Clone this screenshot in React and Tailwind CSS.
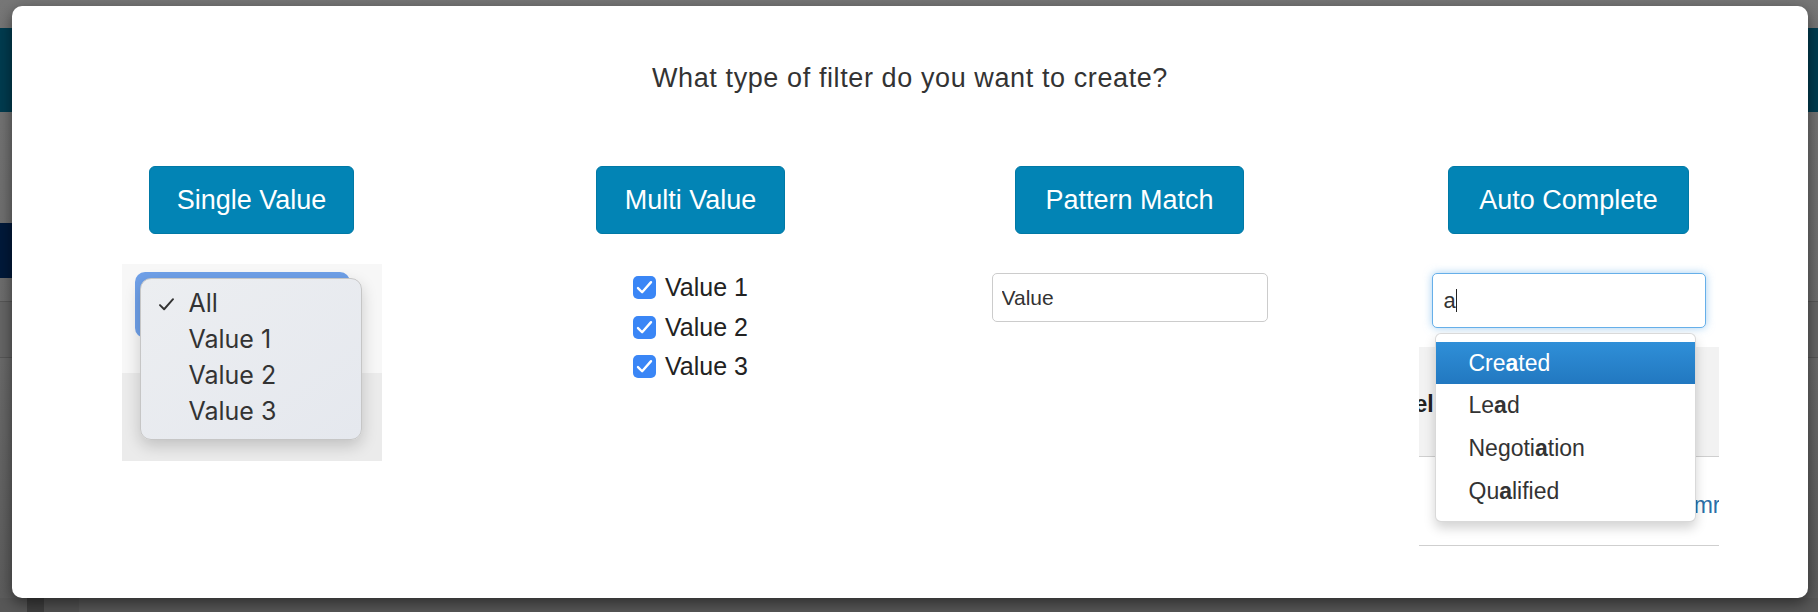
import { Fragment } from "react";

const CheckIcon = ({ className, width = "2.2" }) => (
  <svg viewBox="0 0 16 16" className={className} fill="none" stroke="currentColor" strokeWidth={width} strokeLinecap="round" strokeLinejoin="round">
    <path d="M2.5 8.5l3.5 3.5 7.5-8.5" />
  </svg>
);

// highlight the matched letter in bold
function Match({ text, at }) {
  return (
    <Fragment>
      {text.slice(0, at)}
      <span className="font-bold">{text[at]}</span>
      {text.slice(at + 1)}
    </Fragment>
  );
}

function FilterButton({ label, width }) {
  return (
    <button className={`flex h-[68px] ${width} items-center justify-center rounded-[6px] border border-[#0079a6] bg-[#0284b5] text-[27px] text-white`}>
      {label}
    </button>
  );
}

function SingleValuePreview() {
  const items = ["All", "Value 1", "Value 2", "Value 3"];
  return (
    <div className="relative mt-[30px] flex h-[197px] w-[260px] flex-col">
      <div className="h-[109px] bg-[#f7f7f7] pl-[13px] pt-[8px]">
        <div className="h-[66px] w-[215px] rounded-[10px] bg-[#6fa0e8]" />
      </div>
      <div className="flex-1 bg-[#ebebeb]" />

      {/* native select menu */}
      <div className="absolute left-[18px] top-[14px] h-[162px] w-[222px] rounded-[11px] border border-[#c6c6c6] bg-linear-to-br from-[#eceef1] to-[#e5e8ee] pt-[7px] font-['Inter','Liberation_Sans',sans-serif] text-[25px] text-[#333] shadow-[0_6px_16px_rgba(0,0,0,0.18)]">
        {items.map((item, i) => (
          <div key={item} className="flex h-[36px] items-center">
            <span className="flex w-[48px] pl-[16px]">
              {i === 0 && <CheckIcon className="h-[19px] w-[19px] text-[#333]" width="1.6" />}
            </span>
            <span>{item}</span>
          </div>
        ))}
      </div>
    </div>
  );
}

function MultiValuePreview() {
  return (
    <div className="mt-[34px] flex flex-col">
      {["Value 1", "Value 2", "Value 3"].map((v) => (
        <label key={v} className="flex h-[39.5px] items-center gap-[9px]">
          <span className="flex h-[23px] w-[23px] items-center justify-center rounded-[5px] bg-[#3a86f6]">
            <CheckIcon className="h-[19px] w-[19px] text-white" width="2" />
          </span>
          <span className="text-[25px] text-[#222]">{v}</span>
        </label>
      ))}
    </div>
  );
}

function PatternPreview() {
  return (
    <input
      readOnly
      value="Value"
      className="mt-[39px] h-[49px] w-[276px] rounded-[5px] border border-[#cccccc] bg-white px-[9px] text-[21px] text-[#333] outline-none"
    />
  );
}

function AutoCompletePreview() {
  const options = [
    ["Created", 3],
    ["Lead", 2],
    ["Negotiation", 6],
    ["Qualified", 2],
  ];
  return (
    <div className="relative mt-[39px] flex w-[300px] flex-col items-center">
      <div className="flex h-[55px] w-[274px] items-center rounded-[5px] border border-[#66afe9] bg-white pl-[11px] text-[22px] text-[#333] shadow-[0_0_8px_rgba(102,175,233,0.6)]">
        a<span className="h-[23px] w-[1.5px] bg-[#222]" />
      </div>

      {/* table behind the menu */}
      <div className="mt-[19px] w-full">
        <div className="flex h-[110px] items-center overflow-hidden border-b border-[#cfcfcf] bg-[#f2f2f2] pt-[6px]">
          <span className="-ml-[4px] text-[23px] font-bold text-[#222]">el</span>
        </div>
        <div className="flex h-[89px] items-center justify-end overflow-hidden border-b border-[#cfcfcf] pt-[8px]">
          <span className="-mr-[2px] text-[23px] text-[#2a6fa8]">mr</span>
        </div>
      </div>

      {/* suggestions */}
      <div className="absolute left-[16px] top-[60px] w-[261px] rounded-[6px] border border-black/15 bg-white py-[8px] text-[23px] text-[#333] shadow-[0_6px_12px_rgba(0,0,0,0.175)]">
        {options.map(([label, at], i) => (
          <div
            key={label}
            className={
              i === 0
                ? "flex h-[42px] items-center bg-linear-to-b from-[#2f8fd8] to-[#2278c0] pl-[33px] text-white"
                : "flex h-[43px] items-center pl-[33px]"
            }
          >
            <Match text={label} at={at} />
          </div>
        ))}
      </div>
    </div>
  );
}

export default function App() {
  return (
    <div className="relative h-[612px] w-[1818px] overflow-hidden bg-linear-to-b from-[#777777] via-[#6d6d6d] to-[#5c5c5c] font-['Liberation_Sans',Arial,sans-serif]">
      {/* page under the overlay */}
      <div className="flex h-full flex-col">
        <div className="h-[28px]" />
        <div className="h-[84px] bg-[#003c50]" />
        <div className="h-[111px]" />
        <div className="h-[55px] w-[600px] bg-[#00193a]" />
        <div className="h-[23px]" />
        <div className="h-[57px] border-y border-[#575757] bg-[#666666]" />
        <div className="flex-1" />
        <div className="flex h-[14px] bg-[#585858] pl-[27px]">
          <div className="w-[17px] bg-[#3f3f3f]" />
          <div className="w-[35px] bg-[#525252]" />
        </div>
      </div>

      {/* modal */}
      <div className="absolute left-[12px] top-[6px] h-[592px] w-[1796px] rounded-[10px] bg-white px-[20px] pt-[53px] shadow-[0_5px_15px_rgba(0,0,0,0.5)]">
        <h2 className="text-center text-[27px] leading-[38px] tracking-[0.6px] text-[#333]">
          What type of filter do you want to create?
        </h2>

        <div className="mt-[69px] grid grid-cols-4 items-start">
          <div className="flex flex-col items-center">
            <FilterButton label="Single Value" width="w-[205px]" />
            <SingleValuePreview />
          </div>
          <div className="flex flex-col items-center">
            <FilterButton label="Multi Value" width="w-[189px]" />
            <MultiValuePreview />
          </div>
          <div className="flex flex-col items-center">
            <FilterButton label="Pattern Match" width="w-[229px]" />
            <PatternPreview />
          </div>
          <div className="flex flex-col items-center">
            <FilterButton label="Auto Complete" width="w-[241px]" />
            <AutoCompletePreview />
          </div>
        </div>
      </div>
    </div>
  );
}
